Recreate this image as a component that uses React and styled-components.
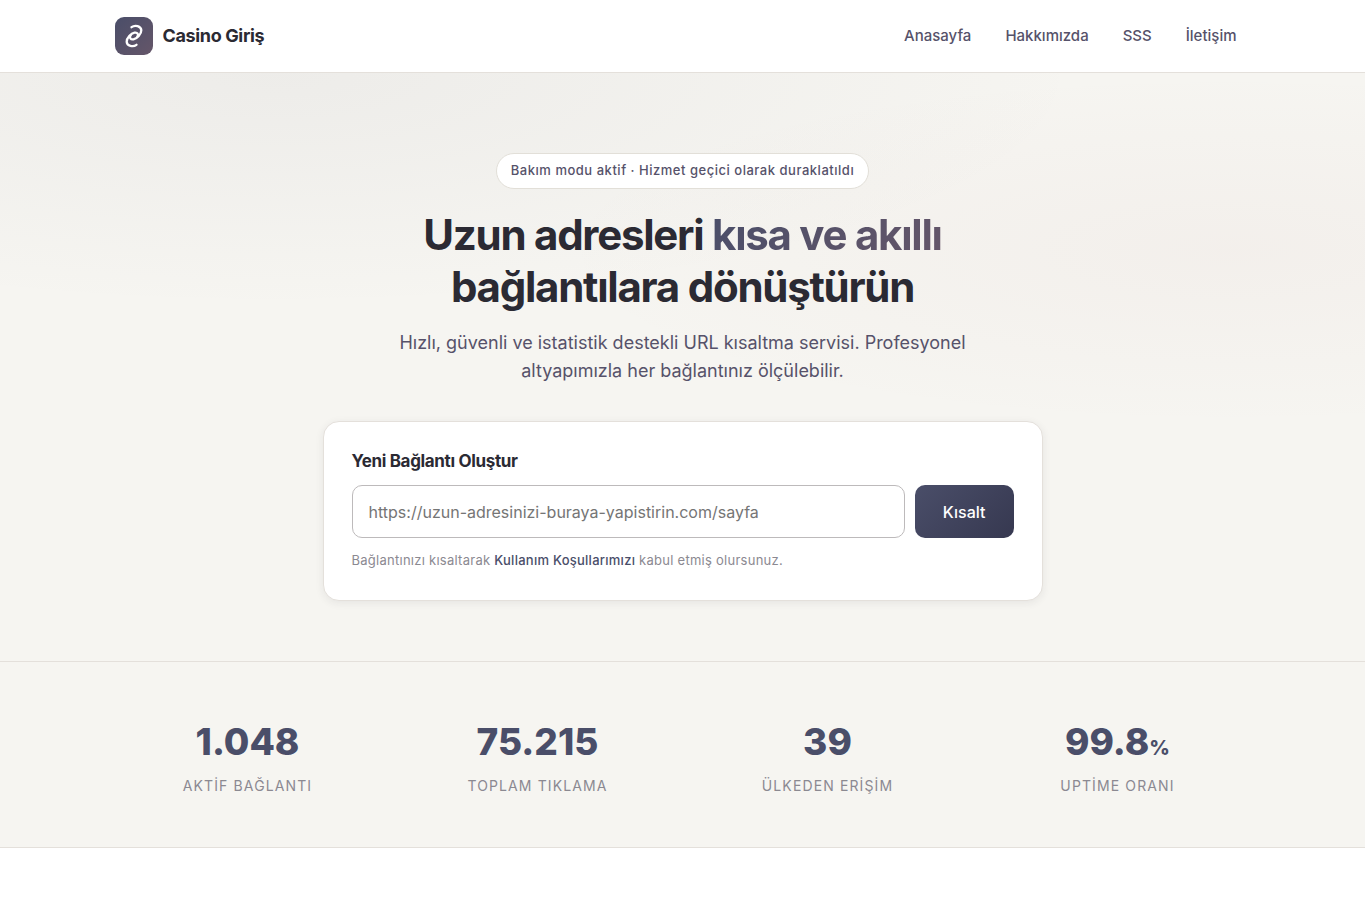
import { useState } from "react";
import styled, { createGlobalStyle } from "styled-components";

const navLinks = ["Anasayfa", "Hakkımızda", "SSS", "İletişim"];

const stats = [
	{ value: "1.048", label: "AKTİF BAĞLANTI" },
	{ value: "75.215", label: "TOPLAM TIKLAMA" },
	{ value: "39", label: "ÜLKEDEN ERİŞİM" },
	{ value: "99.8", unit: "%", label: "UPTİME ORANI" },
];

const App = () => {
	const [url, setUrl] = useState("");

	return (
		<>
			<GlobalStyle />
			<Header>
				<HeaderInner>
					<Brand href="#">
						<LogoBox>
							<svg width="22" height="26" viewBox="-11 -13 22 26" fill="none" stroke="#fff" strokeWidth="2.3" strokeLinecap="round">
								<path d="M-2.500 -8.800C1 -11.500 7 -10 7.300 -5.800C7.400 -2 3 2.600 -0.500 3.300C-3.500 3.900 -5 1.500 -3.300 -0.600" />
								<path d="M2.500 8.800C-1 11.500 -7 10 -7.300 5.800C-7.400 2 -3 -2.600 0.500 -3.300C3.500 -3.900 5 -1.500 3.300 0.600" />
							</svg>
						</LogoBox>
						Casino Giriş
					</Brand>
					<Nav>
						{navLinks.map((name) => (
							<NavLink key={name} href="#">
								{name}
							</NavLink>
						))}
					</Nav>
				</HeaderInner>
			</Header>
			<Hero>
				<Badge>Bakım modu aktif · Hizmet geçici olarak duraklatıldı</Badge>
				<Title>
					Uzun adresleri <Accent>kısa ve akıllı</Accent> bağlantılara dönüştürün
				</Title>
				<Lead>
					Hızlı, güvenli ve istatistik destekli URL kısaltma servisi. Profesyonel altyapımızla her bağlantınız
					ölçülebilir.
				</Lead>
				<Card onSubmit={(e) => e.preventDefault()}>
					<CardLabel htmlFor="url">Yeni Bağlantı Oluştur</CardLabel>
					<Row>
						<UrlInput
							id="url"
							type="url"
							placeholder="https://uzun-adresinizi-buraya-yapistirin.com/sayfa"
							value={url}
							onChange={(e) => setUrl(e.target.value)}
						/>
						<Submit type="submit">Kısalt</Submit>
					</Row>
					<Note>
						Bağlantınızı kısaltarak <a href="#">Kullanım Koşullarımızı</a> kabul etmiş olursunuz.
					</Note>
				</Card>
			</Hero>
			<Stats>
				<StatsGrid>
					{stats.map((stat) => (
						<div key={stat.label}>
							<Value>
								{stat.value}
								{stat.unit && <Unit>{stat.unit}</Unit>}
							</Value>
							<StatLabel>{stat.label}</StatLabel>
						</div>
					))}
				</StatsGrid>
			</Stats>
		</>
	);
};

const GlobalStyle = createGlobalStyle`
	* {
		box-sizing: border-box;
	}
	body {
		margin: 0;
		background: #fff;
		color: #2b2a33;
		font-family: Inter, "Liberation Sans", sans-serif;
		-webkit-font-smoothing: antialiased;
	}
	a {
		text-decoration: none;
	}
`;
const Header = styled.header`
	background: #fff;
	border-bottom: 1px solid #e4e0db;
`;
const HeaderInner = styled.div`
	max-width: 1200px;
	height: 72px;
	margin: 0 auto;
	padding: 0 32px;
	display: flex;
	align-items: center;
	justify-content: space-between;
`;
const Brand = styled.a`
	display: flex;
	align-items: center;
	gap: 10px;
	color: #2b2a33;
	font-size: 18px;
	line-height: 24px;
	font-weight: 700;
	letter-spacing: -0.02em;
`;
const LogoBox = styled.span`
	width: 38px;
	height: 38px;
	border-radius: 9px;
	background: linear-gradient(135deg, #4a4e69, #655669);
	display: flex;
	align-items: center;
	justify-content: center;
`;
const Nav = styled.nav`
	display: flex;
	gap: 6px;
`;
const NavLink = styled.a`
	padding: 8px 14px;
	color: #56526a;
	font-size: 15px;
	line-height: 18px;
	font-weight: 500;
`;
const Hero = styled.section`
	padding: 80px 32px 60px;
	display: flex;
	flex-direction: column;
	align-items: center;
	background:
		radial-gradient(ellipse 60% 40% at 20% 0%, rgba(74, 72, 90, 0.05), transparent 100%),
		radial-gradient(ellipse 50% 30% at 90% 30%, rgba(170, 100, 100, 0.04), transparent 100%),
		#f6f5f1;
`;
const Badge = styled.div`
	padding: 7px 14px 9px;
	border: 1px solid #e2dfd8;
	border-radius: 18px;
	background: #fff;
	color: #56526a;
	font-size: 13px;
	line-height: 18px;
	font-weight: 500;
	letter-spacing: 0.04em;
`;
const Title = styled.h1`
	max-width: 600px;
	margin: 20px 0 16px;
	text-align: center;
	font-size: 42px;
	line-height: 52px;
	font-weight: 700;
	letter-spacing: -0.03em;
`;
const Accent = styled.span`
	background: linear-gradient(135deg, #4a4e69, #655669);
	background-clip: text;
	color: transparent;
`;
const Lead = styled.p`
	max-width: 600px;
	margin: 0 0 36px;
	text-align: center;
	color: #56526a;
	font-size: 18px;
	line-height: 28px;
`;
const Card = styled.form`
	width: 100%;
	max-width: 720px;
	padding: 28px 28px 30px;
	border: 1px solid #e4e0db;
	border-radius: 16px;
	background: #fff;
	box-shadow: 0 2px 8px rgba(43, 42, 51, 0.08);
`;
const CardLabel = styled.label`
	display: block;
	margin-bottom: 13px;
	font-size: 17px;
	line-height: 22px;
	font-weight: 700;
	letter-spacing: -0.02em;
`;
const Row = styled.div`
	display: flex;
	gap: 10px;
`;
const UrlInput = styled.input`
	flex: 1;
	min-width: 0;
	height: 53px;
	padding: 0 16px;
	border: 1px solid #bdbabb;
	border-radius: 10px;
	background: #fff;
	color: #2b2a33;
	font-family: inherit;
	font-size: 16px;
	&::placeholder {
		color: #757575;
	}
`;
const Submit = styled.button`
	padding: 0 28px;
	border: 0;
	border-radius: 10px;
	background: linear-gradient(135deg, #4a4e69, #363850);
	color: #fff;
	font-family: inherit;
	font-size: 16px;
	font-weight: 500;
`;
const Note = styled.p`
	margin: 12px 0 0;
	color: #8b8991;
	font-size: 13px;
	line-height: 20px;
	letter-spacing: 0.02em;
	a {
		color: #4a4e69;
		font-weight: 500;
	}
`;
const Stats = styled.section`
	padding: 48px 0 49px;
	background: #f6f5f1;
	border-top: 1px solid #e4e0db;
	border-bottom: 1px solid #e4e0db;
`;
const StatsGrid = styled.div`
	max-width: 1200px;
	margin: 0 auto;
	padding: 0 32px;
	display: grid;
	grid-template-columns: repeat(4, 1fr);
	gap: 24px;
	text-align: center;
`;
const Value = styled.div`
	color: #4a4e69;
	font-size: 37px;
	line-height: 64px;
	font-weight: 800;
`;
const Unit = styled.span`
	font-size: 20px;
	line-height: 1;
`;
const StatLabel = styled.div`
	color: #8b8991;
	font-size: 14px;
	line-height: 24px;
	letter-spacing: 0.08em;
`;

export default App;
